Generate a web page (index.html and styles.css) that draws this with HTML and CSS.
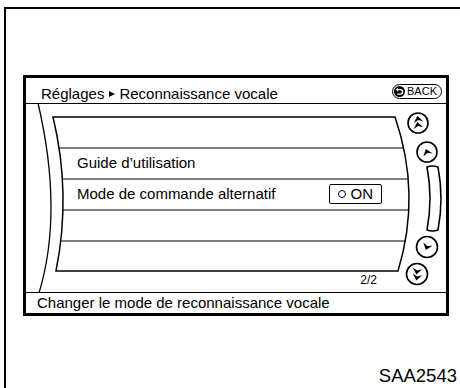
FILE: index.html
```html
<!DOCTYPE html>
<html lang="fr">
<head>
  <meta charset="UTF-8">
  <meta name="viewport" content="width=device-width, initial-scale=1.0">
  <title>Reconnaissance vocale</title>
  <link rel="stylesheet" href="styles.css">
</head>
<body>
  <div class="frame">
    <div class="screen">
      <div class="screen-head">
        <span class="title">Réglages<span class="crumb-arrow"></span>Reconnaissance vocale</span>
        <span class="back-btn">
          <svg class="back-icon" width="11" height="11" viewBox="0 0 12 12">
            <circle cx="6" cy="6" r="6" fill="#000"/>
            <path d="M4.2,4 H7 A2.4,2.4 0 0 1 7,8.8 H3.6" fill="none" stroke="#fff" stroke-width="1.5"/>
            <path d="M1.8,4 L4.6,1.8 L4.6,6.2 Z" fill="#fff"/>
          </svg>BACK</span>
      </div>

      <div class="viewport">
        <!-- curved display graphic: arcs, list outline, scroll controls -->
        <svg class="viewport-art" width="420" height="188" viewBox="0 0 420 188">
          <defs>
            <path id="ah" d="M0,-3.6 L4.8,2.6 L0,0.6 L-4.8,2.6 Z"/>
          </defs>
          <g fill="none" stroke="#000">
            <path d="M12,-1 Q37.5,108 13,189" stroke-width="1.3"/>
            <path d="M27,13 H369 Q395.5,90 372,167 H30 Q45.5,90 27,13 Z" stroke-width="1.5"/>
            <g stroke-width="1.2">
              <line x1="33.1" y1="44" x2="377.7" y2="44"/>
              <line x1="36.4" y1="75" x2="382" y2="75"/>
              <line x1="37" y1="106" x2="382.8" y2="106"/>
              <line x1="34.7" y1="137" x2="379.3" y2="137"/>
            </g>
            <g stroke-width="1.6">
              <circle cx="392" cy="19" r="10"/>
              <circle cx="401" cy="48" r="10"/>
              <path d="M401,63 Q407,94.5 401,126 Q406.5,128 412,126 Q418,94.5 412,63 Q406.5,61 401,63 Z" stroke-linejoin="round"/>
              <circle cx="401" cy="143" r="10.5"/>
              <circle cx="391" cy="170" r="10.5"/>
            </g>
          </g>
          <g fill="#000">
            <use href="#ah" transform="translate(392,15.5) rotate(-10)"/>
            <use href="#ah" transform="translate(392,21.5) rotate(-10)"/>
            <use href="#ah" transform="translate(401,48.5) rotate(-20)"/>
            <use href="#ah" transform="translate(401,142.5) rotate(200)"/>
            <use href="#ah" transform="translate(391,167) rotate(190)"/>
            <use href="#ah" transform="translate(391,173) rotate(190)"/>
          </g>
        </svg>

        <ul class="menu-list">
          <li class="menu-item"></li>
          <li class="menu-item">Guide d’utilisation</li>
          <li class="menu-item">Mode de commande alternatif
            <span class="toggle"><span class="toggle-dot"></span>ON</span>
          </li>
          <li class="menu-item"></li>
          <li class="menu-item"></li>
        </ul>
        <div class="page-count">2/2</div>
      </div>

      <div class="screen-foot">Changer le mode de reconnaissance vocale</div>
    </div>

    <div class="figure-code">SAA2543</div>
  </div>
</body>
</html>
```

FILE: styles.css
```css
* {
  box-sizing: border-box;
}

body {
  margin: 0;
  font-family: 'Liberation Sans', Arial, sans-serif;
  color: #000;
  background: #fff;
}

.frame {
  margin: 7px 0 0 4px;
  height: 381px;
  border-left: 2px solid #000;
  border-top: 2px solid #000;
  overflow: hidden;
}

.screen {
  margin: 66px 0 0 17px;
  width: 426px;
  height: 241px;
  border: 3px solid #000;
  display: flex;
  flex-direction: column;
}

.screen-head {
  height: 26px;
  flex-shrink: 0;
  border-bottom: 1px solid #000;
  display: flex;
  align-items: center;
  justify-content: space-between;
  padding: 0 4px 0 15px;
}

.title {
  font-size: 15px;
  line-height: 17px;
  padding-top: 5px;
  white-space: nowrap;
}

.crumb-arrow {
  display: inline-block;
  width: 0;
  height: 0;
  margin: 0 4px 0 5px;
  border-left: 6px solid #000;
  border-top: 3.5px solid transparent;
  border-bottom: 3.5px solid transparent;
  vertical-align: 2px;
}

.back-btn {
  display: flex;
  align-items: center;
  gap: 2px;
  height: 15px;
  margin-top: 1px;
  padding: 0 4px 0 1px;
  border: 1.5px solid #000;
  border-radius: 8px;
  font-size: 11px;
  line-height: 12px;
}

.back-icon {
  display: block;
}

.viewport {
  position: relative;
  height: 188px;
  flex-shrink: 0;
}

.viewport-art {
  position: absolute;
  left: 0;
  top: 0;
  overflow: visible;
}

.menu-list {
  position: relative;
  list-style: none;
  margin: 0;
  padding: 13px 0 0 0;
}

.menu-item {
  height: 31px;
  display: flex;
  align-items: center;
  padding: 0 64px 2px 51px;
  font-size: 15px;
  line-height: 17px;
  white-space: nowrap;
}

.toggle {
  margin-left: auto;
  width: 53px;
  height: 20px;
  display: flex;
  align-items: center;
  gap: 5px;
  padding-left: 7.5px;
  border: 1.5px solid #000;
  border-radius: 2px;
}

.toggle-dot {
  width: 8px;
  height: 8px;
  border: 1.5px solid #000;
  border-radius: 50%;
}

.page-count {
  position: relative;
  margin-top: 1px;
  padding-right: 69px;
  text-align: right;
  font-size: 12px;
  line-height: 14px;
}

.screen-foot {
  height: 21px;
  flex-shrink: 0;
  border-top: 1px solid #000;
  padding-left: 11px;
  font-size: 15px;
  line-height: 20px;
  white-space: nowrap;
}

.figure-code {
  margin-top: 50px;
  padding-right: 3px;
  text-align: right;
  font-size: 18.5px;
  line-height: 20px;
}
```
